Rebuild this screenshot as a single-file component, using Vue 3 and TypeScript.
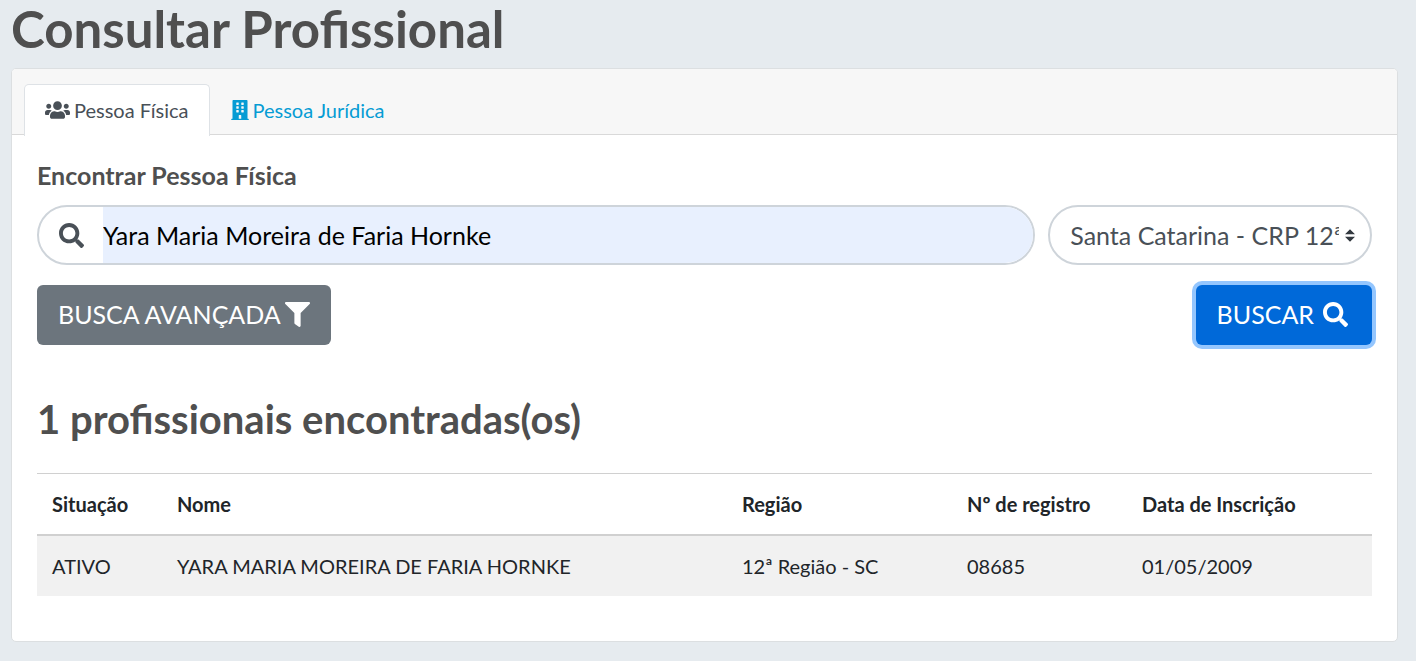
<script setup lang="ts">
import { ref } from 'vue'

interface Professional {
  status: string
  name: string
  region: string
  registry: string
  date: string
}

const name = ref('Yara Maria Moreira de Faria Hornke')
const region = ref('12')
const columns: { label: string; cls: string }[] = [
  { label: 'Situação', cls: 'col-status' },
  { label: 'Nome', cls: 'col-name' },
  { label: 'Região', cls: 'col-region' },
  { label: 'Nº de registro', cls: 'col-registry' },
  { label: 'Data de Inscrição', cls: 'col-date' },
]
const results: Professional[] = [
  {
    status: 'ATIVO',
    name: 'YARA MARIA MOREIRA DE FARIA HORNKE',
    region: '12ª Região - SC',
    registry: '08685',
    date: '01/05/2009',
  },
]
const searchPath =
  'M505 442.7L405.3 343c-4.5-4.5-10.6-7-17-7H372c27.6-35.3 44-79.7 44-128C416 93.1 322.9 0 208 0S0 93.1 0 208s93.1 208 208 208c48.3 0 92.7-16.4 128-44v16.3c0 6.4 2.5 12.5 7 17l99.7 99.7c9.4 9.4 24.6 9.4 33.9 0l28.3-28.3c9.4-9.4 9.4-24.6.1-34zM208 336c-70.7 0-128-57.2-128-128 0-70.7 57.2-128 128-128 70.7 0 128 57.2 128 128 0 70.7-57.2 128-128 128z'
</script>

<template>
  <main class="page">
    <h1>Consultar Profissional</h1>
    <section class="card">
      <nav class="card-header">
        <a class="tab active" href="#fisica" aria-current="page">
          <svg class="icon users" viewBox="0 0 640 512" aria-hidden="true"><path d="M96 224c35.3 0 64-28.7 64-64s-28.7-64-64-64-64 28.7-64 64 28.7 64 64 64zm448 0c35.3 0 64-28.7 64-64s-28.7-64-64-64-64 28.7-64 64 28.7 64 64 64zm32 32h-64c-17.6 0-33.5 7.1-45.1 18.6 40.3 22.1 68.9 62 75.1 109.4h66c17.7 0 32-14.3 32-32v-32c0-35.3-28.7-64-64-64zm-256 0c61.9 0 112-50.1 112-112S381.9 32 320 32 208 82.1 208 144s50.1 112 112 112zm76.8 32h-8.3c-20.8 10-43.9 16-68.5 16s-47.6-6-68.5-16h-8.3C179.6 288 128 339.6 128 403.2V432c0 26.5 21.5 48 48 48h288c26.5 0 48-21.5 48-48v-28.8c0-63.6-51.6-115.2-115.2-115.2zm-223.7-13.4C161.5 263.1 145.6 256 128 256H64c-35.3 0-64 28.7-64 64v32c0 17.7 14.3 32 32 32h65.9c6.3-47.4 34.9-87.3 75.2-109.4z" /></svg>
          <span>Pessoa Física</span>
        </a>
        <a class="tab" href="#juridica">
          <svg class="icon building" viewBox="0 0 448 512" aria-hidden="true"><path fill-rule="evenodd" d="M436 480h-20V24c0-13.255-10.745-24-24-24H56C42.745 0 32 10.745 32 24v456H12c-6.627 0-12 5.373-12 12v20h448v-20c0-6.627-5.373-12-12-12zM128 76c0-6.627 5.373-12 12-12h40c6.627 0 12 5.373 12 12v40c0 6.627-5.373 12-12 12h-40c-6.627 0-12-5.373-12-12V76zM128 172c0-6.627 5.373-12 12-12h40c6.627 0 12 5.373 12 12v40c0 6.627-5.373 12-12 12h-40c-6.627 0-12-5.373-12-12v-40zM128 268c0-6.627 5.373-12 12-12h40c6.627 0 12 5.373 12 12v40c0 6.627-5.373 12-12 12h-40c-6.627 0-12-5.373-12-12v-40zM256 76c0-6.627 5.373-12 12-12h40c6.627 0 12 5.373 12 12v40c0 6.627-5.373 12-12 12h-40c-6.627 0-12-5.373-12-12V76zM256 172c0-6.627 5.373-12 12-12h40c6.627 0 12 5.373 12 12v40c0 6.627-5.373 12-12 12h-40c-6.627 0-12-5.373-12-12v-40zM256 268c0-6.627 5.373-12 12-12h40c6.627 0 12 5.373 12 12v40c0 6.627-5.373 12-12 12h-40c-6.627 0-12-5.373-12-12v-40zM192 480v-84c0-6.627 5.373-12 12-12h40c6.627 0 12 5.373 12 12v84z" /></svg>
          <span>Pessoa Jurídica</span>
        </a>
      </nav>
      <div class="card-body">
        <form @submit.prevent>
          <h2 class="form-title">Encontrar Pessoa Física</h2>
          <div class="fields">
            <div class="search-box">
              <label for="name" aria-label="Nome">
                <svg class="icon large" viewBox="0 0 512 512" aria-hidden="true"><path :d="searchPath" /></svg>
              </label>
              <input id="name" v-model="name" type="text" autocomplete="name" spellcheck="false" />
            </div>
            <select v-model="region" class="region" aria-label="Região">
              <option value="12">Santa Catarina - CRP 12ª Região</option>
            </select>
          </div>
          <div class="actions">
            <button type="button" class="btn advanced">
              <span>BUSCA AVANÇADA</span>
              <svg class="icon large" viewBox="0 0 512 512" aria-hidden="true"><path d="M487.976 0H24.028C2.71 0-8.047 25.866 7.058 40.971L192 225.941V432c0 7.831 3.821 15.17 10.237 19.662l80 55.98C298.02 518.69 320 507.493 320 487.98V225.941l184.947-184.97C520.021 25.896 509.338 0 487.976 0z" /></svg>
            </button>
            <button type="submit" class="btn submit">
              <span>BUSCAR</span>
              <svg class="icon large" viewBox="0 0 512 512" aria-hidden="true"><path :d="searchPath" /></svg>
            </button>
          </div>
        </form>
        <h2 class="count">{{ results.length }} profissionais encontradas(os)</h2>
        <table>
          <thead>
            <tr>
              <th v-for="c in columns" :key="c.cls" :class="c.cls" scope="col">{{ c.label }}</th>
            </tr>
          </thead>
          <tbody>
            <tr v-for="r in results" :key="r.registry">
              <td>{{ r.status }}</td>
              <td>{{ r.name }}</td>
              <td>{{ r.region }}</td>
              <td>{{ r.registry }}</td>
              <td>{{ r.date }}</td>
            </tr>
          </tbody>
        </table>
      </div>
    </section>
  </main>
</template>

<style>
body {
  margin: 0;
  background: #e6ebef;
}
</style>

<style scoped>
* {
  box-sizing: border-box;
}
.page {
  padding: 0 18px 19px 11px;
  font: 20px/30px Lato, sans-serif;
  color: #212529;
}
h1,
h2 {
  margin: 0;
  color: #4f4f4f;
  font-weight: 700;
}
h1 {
  margin-bottom: 10px;
  font-size: 51px;
  line-height: 58px;
}
.card {
  background: #fff;
  border: 1px solid #dcdfe1;
  border-radius: 5px;
}
.card-header {
  display: flex;
  padding: 15px 12px 0;
  background: #f7f7f7;
  border-bottom: 1px solid #d9d9d9;
  border-radius: 4px 4px 0 0;
}
.tab {
  display: flex;
  align-items: center;
  gap: 3px;
  margin-bottom: -2px;
  padding: 10px 20px 11px;
  border: 1px solid transparent;
  border-bottom: 0;
  border-radius: 5px 5px 0 0;
  color: #069cd4;
  text-decoration: none;
}
.tab.active {
  gap: 4px;
  padding-right: 21px;
  background: #fff;
  border-color: #dee2e6;
  color: #495057;
}
.icon {
  display: block;
  flex: none;
  height: 20px;
  fill: currentColor;
}
.users {
  width: 25px;
}
.building {
  width: 18px;
}
.large {
  width: 25px;
  height: 25px;
}
.card-body {
  padding: 25px 25px 45px;
}
.form-title {
  margin-bottom: 15px;
  font-size: 25px;
  line-height: 30px;
}
.fields {
  display: flex;
  gap: 13px;
  margin-bottom: 20px;
}
.search-box {
  display: flex;
  flex: 1;
  min-width: 0;
  height: 60px;
  overflow: hidden;
  border: 2px solid #ced4da;
  border-radius: 30px;
}
.search-box label {
  display: flex;
  align-items: center;
  padding: 0 19px 0 20px;
  color: #495057;
}
.search-box input {
  flex: 1;
  min-width: 0;
  padding: 0;
  border: 0;
  outline: 0;
  background: #e8f0fe;
  color: #000;
  font: 25px/38px Lato, sans-serif;
}
.region {
  flex: 0 0 calc(25% - 10px);
  min-width: 0;
  height: 60px;
  padding: 0 31px 0 20px;
  appearance: none;
  border: 2px solid #ced4da;
  border-radius: 30px;
  background: #fff url("data:image/svg+xml,%3csvg xmlns='http://www.w3.org/2000/svg' viewBox='0 0 4 5'%3e%3cpath fill='%23343a40' d='M2 0L0 2h4zm0 5L0 3h4z'/%3e%3c/svg%3e") no-repeat right 15px center / 10px 13px;
  color: #495057;
  font: 25px/38px Lato, sans-serif;
}
.actions {
  display: flex;
  justify-content: space-between;
  margin-bottom: 51px;
}
.btn {
  display: flex;
  align-items: center;
  height: 60px;
  padding: 0 21px 2px;
  border: 0;
  border-radius: 6px;
  color: #fff;
  font: 25px/38px Lato, sans-serif;
}
.advanced {
  gap: 4px;
  background: #6c757d;
}
.submit {
  gap: 9px;
  padding-right: 24px;
  background: #0069d9;
  box-shadow: 0 0 0 4px #94c6fe;
}
.count {
  margin-bottom: 31px;
  font-size: 40px;
  line-height: 46px;
}
table {
  width: 100%;
  table-layout: fixed;
  border-spacing: 0;
}
th,
td {
  padding: 15px;
  text-align: left;
}
th {
  border-top: 1px solid #d0d0d0;
  border-bottom: 2px solid #d0d0d0;
  font-weight: 700;
}
td {
  background: #f1f1f1;
}
.col-status {
  width: 125px;
}
.col-region {
  width: 225px;
}
.col-registry {
  width: 175px;
}
.col-date {
  width: 245px;
}
</style>
